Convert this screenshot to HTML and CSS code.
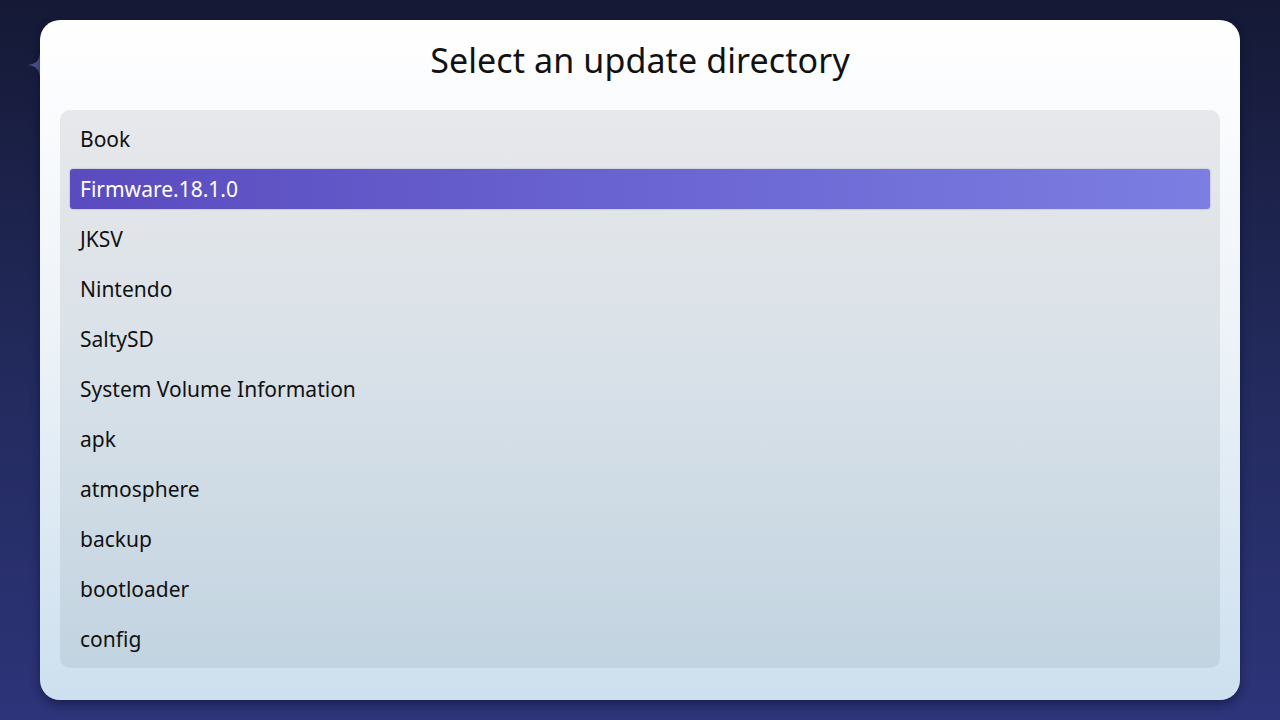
FILE: index.html
```html
<!DOCTYPE html>
<html lang="en">
<head>
    <meta charset="UTF-8">
    <title>Select an update directory</title>
    <link rel="stylesheet" href="styles.css">
</head>
<body>

    <svg class="sparkle" width="24" height="24" viewBox="0 0 24 24">
        <path d="M12 0 C13 8 16 11 24 12 C16 13 13 16 12 24 C11 16 8 13 0 12 C8 11 11 8 12 0 Z" fill="#4a5290"/>
    </svg>

    <div class="dialog">
        <h1 class="dialog-title">Select an update directory</h1>

        <ul class="dir-list">
            <li class="dir-item">Book</li>
            <li class="dir-item selected">Firmware.18.1.0</li>
            <li class="dir-item">JKSV</li>
            <li class="dir-item">Nintendo</li>
            <li class="dir-item">SaltySD</li>
            <li class="dir-item">System Volume Information</li>
            <li class="dir-item">apk</li>
            <li class="dir-item">atmosphere</li>
            <li class="dir-item">backup</li>
            <li class="dir-item">bootloader</li>
            <li class="dir-item">config</li>
        </ul>
    </div>

</body>
</html>
```

FILE: styles.css
```css
html, body {
    height: 100%;
}

body {
    margin: 0;
    padding: 20px 40px;
    box-sizing: border-box;
    font-family: 'Noto Sans', 'Open Sans', sans-serif;
    color: #111;
    background: linear-gradient(to bottom, #151936 0%, #222a5c 50%, #2d3479 100%);
    overflow: hidden;
}

/* little star peeking out behind the dialog */
.sparkle {
    position: absolute;
    left: 28px;
    top: 53px;
}

.dialog {
    position: relative;
    height: 680px;
    box-sizing: border-box;
    padding: 0 20px 32px;
    border-radius: 20px;
    background: linear-gradient(to bottom, #ffffff 0%, #eef3f8 45%, #cde0ef 100%);
    box-shadow: 0 4px 10px rgba(5, 8, 30, 0.45);
    display: flex;
    flex-direction: column;
}

.dialog-title {
    margin: 0;
    height: 90px;
    line-height: 80px;
    text-align: center;
    font-weight: 400;
    font-size: 34px;
    letter-spacing: 0.1px;
}

.dir-list {
    list-style: none;
    margin: 0;
    padding: 9px 10px;
    flex: 1;
    display: flex;
    flex-direction: column;
    gap: 10px;
    border-radius: 10px;
    background: linear-gradient(to bottom, #e7e8eb 0%, #d9e1e8 45%, #c2d4e1 100%);
}

.dir-item {
    height: 40px;
    line-height: 40px;
    padding: 0 10px;
    font-size: 21px;
    border-radius: 3px;
}

.dir-item.selected {
    color: #fff;
    background: linear-gradient(to right, #5a4bbe 0%, #6a64d2 50%, #7c7ee2 100%);
    box-shadow: 0 0 2px rgba(40, 40, 90, 0.35);
}
```
